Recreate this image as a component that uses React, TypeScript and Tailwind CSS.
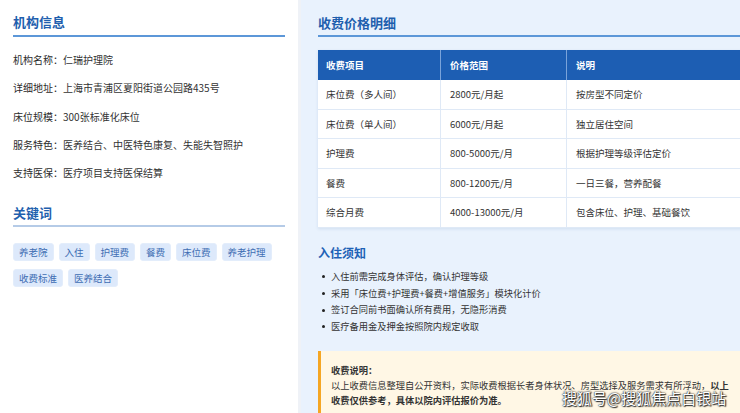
import React from "react";

const info: [string, string][] = [
  ["机构名称：", "仁瑞护理院"],
  ["详细地址：", "上海市青浦区夏阳街道公园路435号"],
  ["床位规模：", "300张标准化床位"],
  ["服务特色：", "医养结合、中医特色康复、失能失智照护"],
  ["支持医保：", "医疗项目支持医保结算"],
];

const tags = ["养老院", "入住", "护理费", "餐费", "床位费", "养老护理", "收费标准", "医养结合"];

const rows: [string, string, string][] = [
  ["床位费（多人间）", "2800元/月起", "按房型不同定价"],
  ["床位费（单人间）", "6000元/月起", "独立居住空间"],
  ["护理费", "800-5000元/月", "根据护理等级评估定价"],
  ["餐费", "800-1200元/月", "一日三餐，营养配餐"],
  ["综合月费", "4000-13000元/月", "包含床位、护理、基础餐饮"],
];

const notes = [
  "入住前需完成身体评估，确认护理等级",
  "采用「床位费+护理费+餐费+增值服务」模块化计价",
  "签订合同前书面确认所有费用，无隐形消费",
  "医疗备用金及押金按照院内规定收取",
];

export default function App() {
  return (
    <div
      className="relative w-[740px] h-[413px] overflow-hidden flex bg-white"
      style={{ fontFamily: '"Noto Sans CJK SC", "Noto Sans", sans-serif' }}
    >
      {/* Left panel */}
      <div className="w-[298px] shrink-0 bg-white px-[13px] pt-[13px]">
        <div className="text-[13px] leading-[18px] font-bold text-[#1f5fae] pb-[4px] border-b-2 border-[#5c97d8]">
          机构信息
        </div>
        <div className="mt-[15px] flex flex-col gap-[12.33px]">
          {info.map(([k, v]) => (
            <div key={k} className="text-[10px] leading-[16px] text-[#333] whitespace-nowrap">
              <span className="text-[#2b2b2b]">{k}</span>
              <span>{v}</span>
            </div>
          ))}
        </div>
        <div className="mt-[23px] text-[13px] leading-[18px] font-bold text-[#1f5fae] pb-[3px] border-b-2 border-[#b5cbe7]">
          关键词
        </div>
        <div className="mt-[16px] flex flex-wrap gap-x-[5px] gap-y-[8px]">
          {tags.map((t) => (
            <span
              key={t}
              className="h-[18px] px-[5px] flex items-center rounded-[3px] bg-[#dde9fb] border border-[#e3edfb] text-[9.5px] text-[#3d6db3] whitespace-nowrap"
            >
              {t}
            </span>
          ))}
        </div>
      </div>

      {/* Right panel */}
      <div className="w-[464px] shrink-0 border-l-[3px] border-[#eff2f7] bg-[#e9f2fd] pl-[17px] pr-[17px] pt-[14px]">
        <div className="w-[427px]">
          <div className="text-[13px] leading-[18px] font-bold text-[#1f5fae] pb-[3px] border-b-2 border-[#5c97d8]">
            收费价格明细
          </div>

          <div className="mt-[13px] bg-white shadow-[0_1px_3px_rgba(30,80,150,0.12)]">
            <div className="grid grid-cols-[123px_126px_1fr] h-[30px] bg-[#1d5eb3] text-white text-[9.5px] font-bold">
              <div className="flex items-center px-[8px] border-r border-[#7aa3da]">收费项目</div>
              <div className="flex items-center px-[9px] border-r border-[#7aa3da]">价格范围</div>
              <div className="flex items-center px-[9px]">说明</div>
            </div>
            {rows.map((r) => (
              <div
                key={r[0]}
                className="grid grid-cols-[123px_126px_1fr] h-[29.5px] border-b border-[#dfe9f6] text-[9.5px] text-[#333]"
              >
                <div className="flex items-center px-[8px] border-r border-[#dfe9f6] whitespace-nowrap">{r[0]}</div>
                <div className="flex items-center px-[9px] border-r border-[#dfe9f6] whitespace-nowrap">{r[1]}</div>
                <div className="flex items-center px-[9px] whitespace-nowrap">{r[2]}</div>
              </div>
            ))}
          </div>

          <div className="mt-[17px] text-[12px] leading-[16px] font-bold text-[#1e62b6]">入住须知</div>
          <ul className="mt-[8px]">
            {notes.map((n) => (
              <li key={n} className="flex items-center h-[16.67px] text-[9.25px] text-[#333] whitespace-nowrap">
                <span className="w-[3px] h-[3px] rounded-full bg-[#222] ml-[4px] mr-[6px] shrink-0" />
                {n}
              </li>
            ))}
          </ul>

          <div className="mt-[16px] border-l-[3px] border-[#f5a623] bg-[#fff7e5] pl-[10px] pr-[10px] pt-[12px] pb-[12px] text-[9.25px] leading-[15px] text-[#333]">
            <div className="font-bold">收费说明：</div>
            <p>
              以上收费信息整理自公开资料，实际收费根据长者身体状况、房型选择及服务需求有所浮动，
              <span className="font-bold">以上收费仅供参考，具体以院内评估报价为准。</span>
            </p>
          </div>
        </div>
      </div>

      {/* Watermark */}
      <div className="absolute left-[562px] top-[388px] text-[15px] leading-[19px] text-white whitespace-nowrap [text-shadow:0_0_2px_#222,0_0_1px_#222,1px_1px_1px_#333]">
        搜狐号@搜狐焦点白银站
      </div>
    </div>
  );
}
